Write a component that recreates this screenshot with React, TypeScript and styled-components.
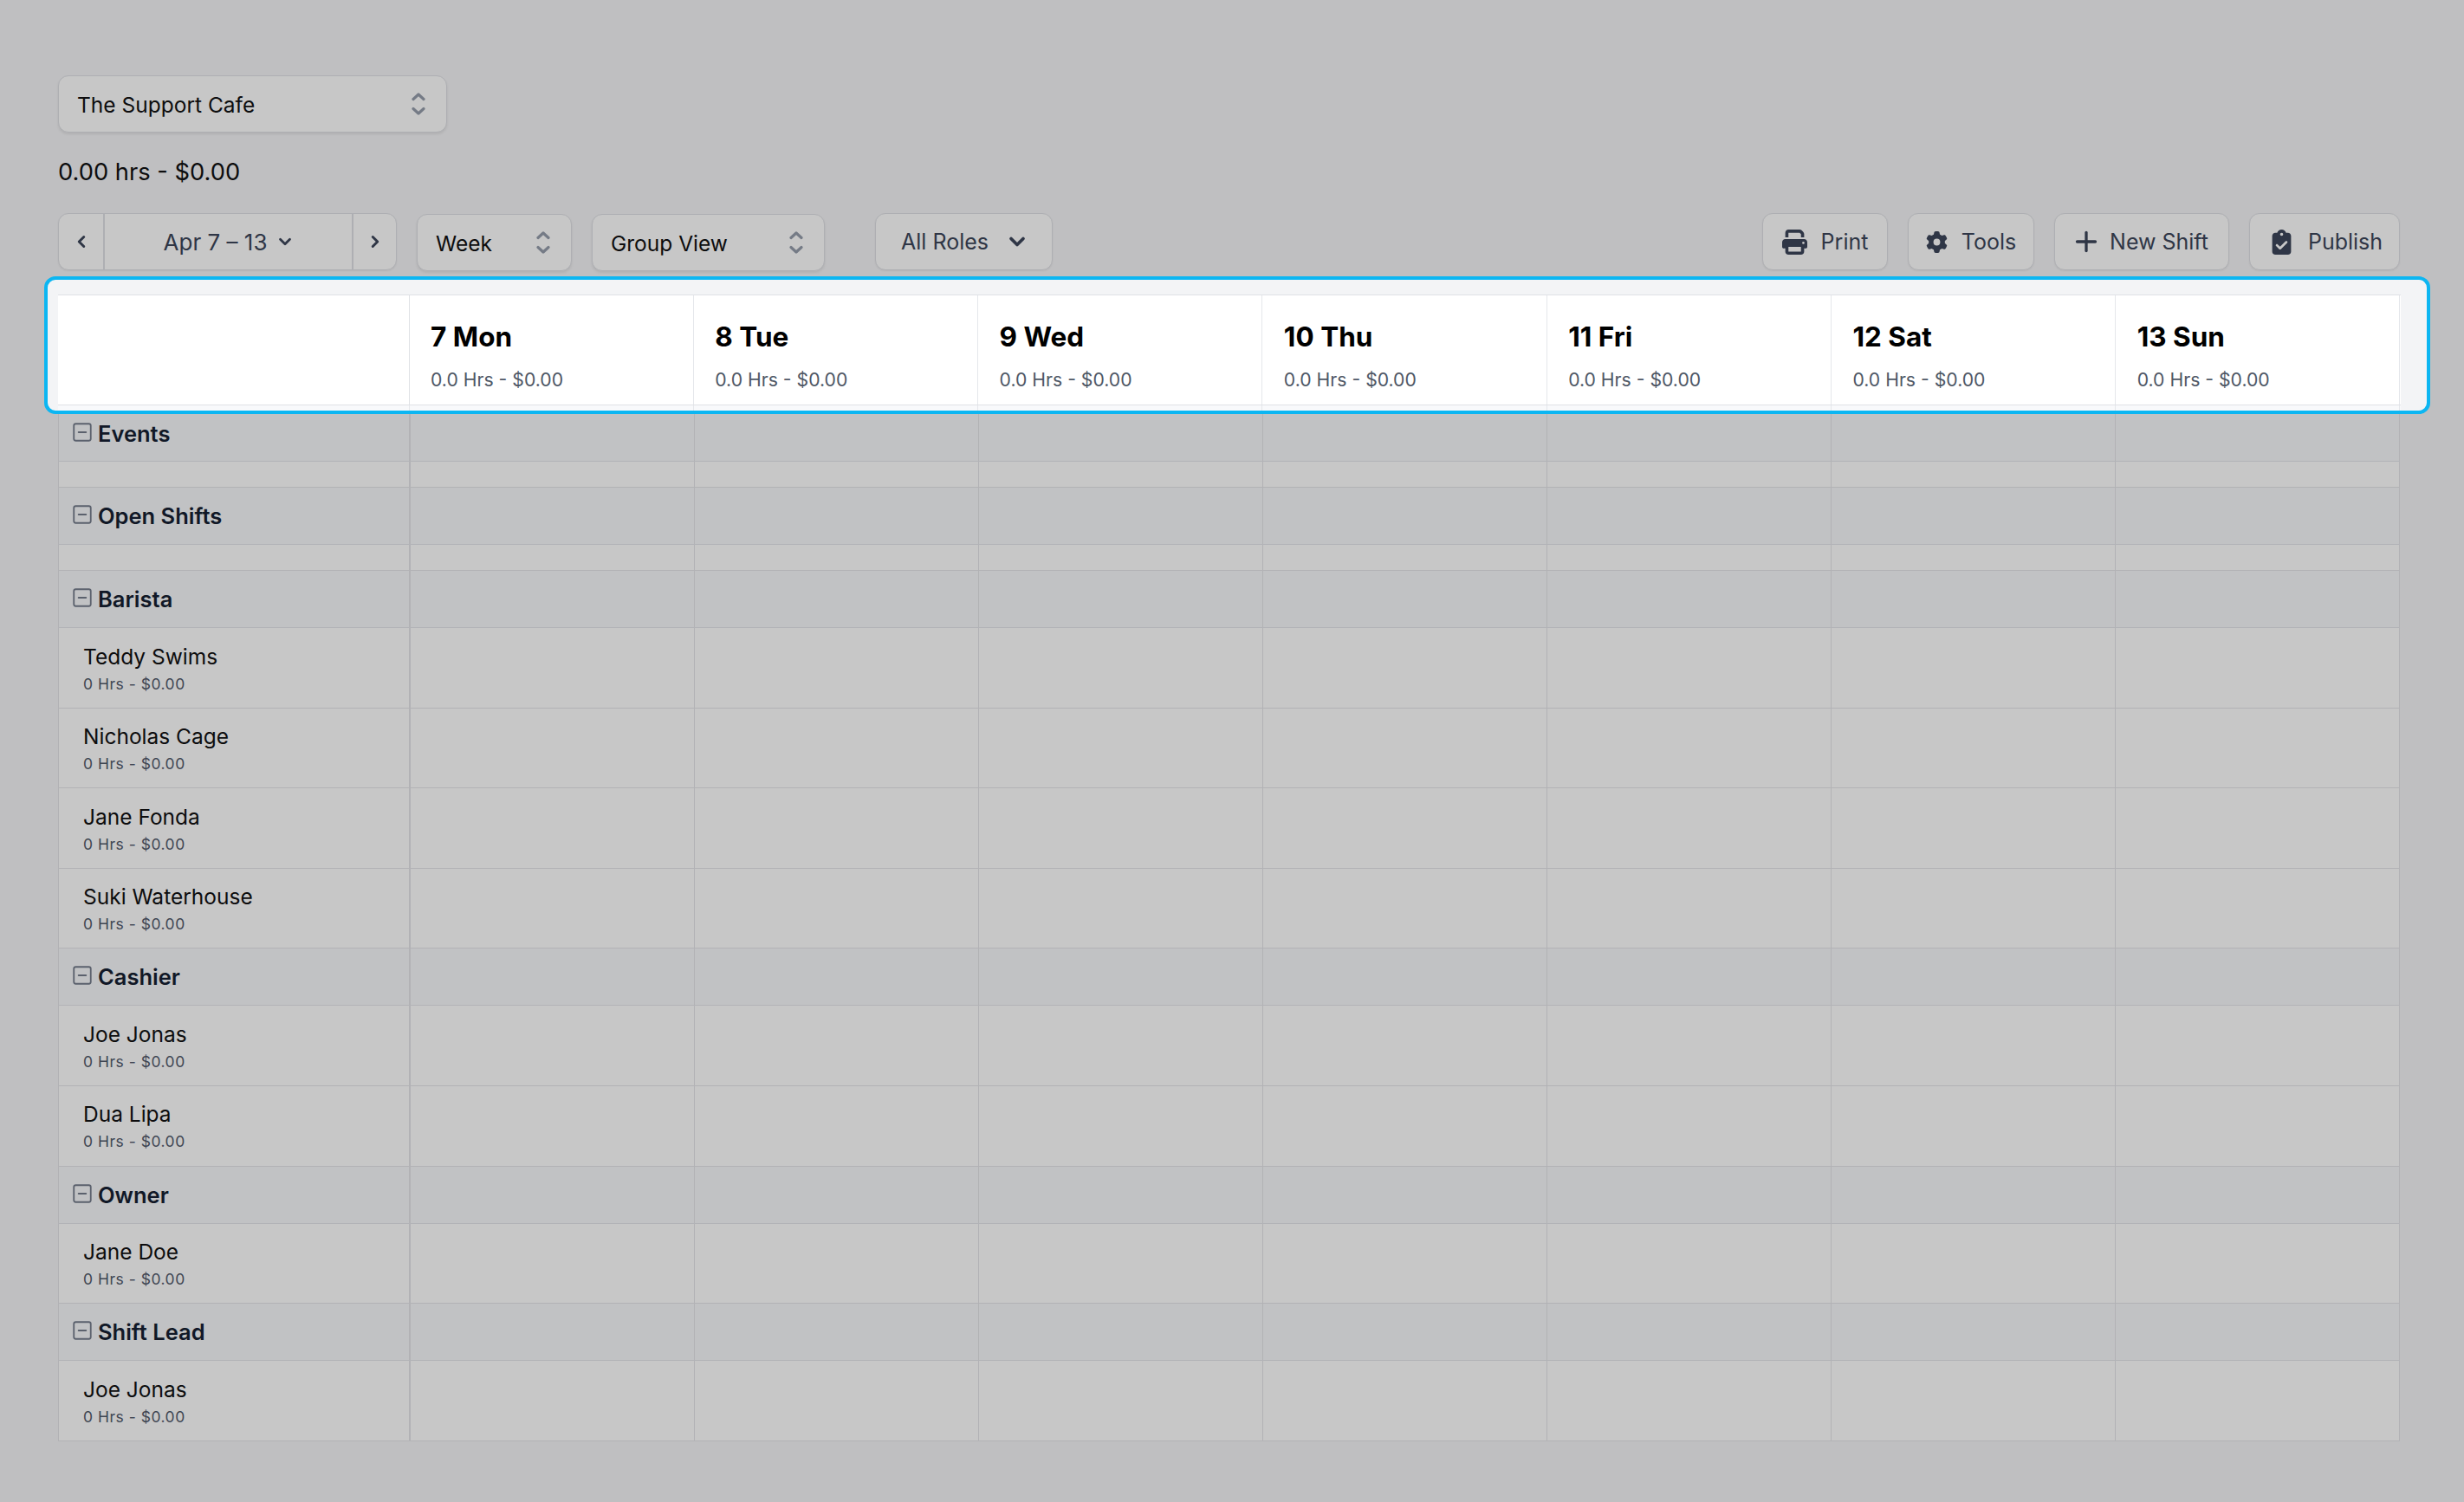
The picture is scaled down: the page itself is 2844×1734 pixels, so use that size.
import React from 'react';
import styled, { createGlobalStyle } from 'styled-components';
import { FaPrint, FaGear, FaClipboardCheck } from 'react-icons/fa6';
import { Plus, SquareMinus, ChevronLeft, ChevronRight, ChevronDown } from 'lucide-react';

const GlobalStyle = createGlobalStyle`
  html, body {
    margin: 0;
    background: #bfbfc1;
    font-family: Inter, "Noto Sans", sans-serif;
  }
`;

const days = ['7 Mon', '8 Tue', '9 Wed', '10 Thu', '11 Fri', '12 Sat', '13 Sun'];

const groups = [
  { name: 'Events', people: [], blank: true, first: true },
  { name: 'Open Shifts', people: [], blank: true },
  { name: 'Barista', people: ['Teddy Swims', 'Nicholas Cage', 'Jane Fonda', 'Suki Waterhouse'] },
  { name: 'Cashier', people: ['Joe Jonas', 'Dua Lipa'] },
  { name: 'Owner', people: ['Jane Doe'] },
  { name: 'Shift Lead', people: ['Joe Jonas'] },
];

const Updown = () => (
  <UpdownIcon viewBox="0 0 16 28" fill="none" stroke="#757b86" strokeWidth="3.2" strokeLinecap="round" strokeLinejoin="round">
    <path d="M2 8.5 8 3l6 5.5" />
    <path d="M2 19.5 8 25l6-5.5" />
  </UpdownIcon>
);

const App = () => {
  return (
    <Page>
      <GlobalStyle />
      <SelectBox $width={449}>
        The Support Cafe
        <Updown />
      </SelectBox>
      <Totals>0.00 hrs - $0.00</Totals>
      <Toolbar>
        <Pager>
          <PagerArrow $width={51}>
            <ChevronLeft size={22} strokeWidth={3.2} />
          </PagerArrow>
          <PagerLabel>
            Apr 7 – 13
            <ChevronDown size={22} strokeWidth={3} />
          </PagerLabel>
          <PagerArrow $width={49}>
            <ChevronRight size={22} strokeWidth={3.2} />
          </PagerArrow>
        </Pager>
        <SelectBox $width={179} $pill>
          Week
          <Updown />
        </SelectBox>
        <SelectBox $width={269} $pill>
          Group View
          <Updown />
        </SelectBox>
        <RolesButton>
          All Roles
          <ChevronDown size={28} strokeWidth={3.2} />
        </RolesButton>
        <Actions>
          <ActionButton $width={145}>
            <FaPrint size={29} />
            Print
          </ActionButton>
          <ActionButton $width={146}>
            <FaGear size={25} />
            Tools
          </ActionButton>
          <ActionButton $width={202}>
            <PlusIcon size={36} strokeWidth={2.2} />
            New Shift
          </ActionButton>
          <ActionButton $width={174} $inset={3}>
            <FaClipboardCheck size={29} />
            Publish
          </ActionButton>
        </Actions>
      </Toolbar>
      <Schedule>
        <Highlight>
          <HeaderRow>
            <HeaderCorner />
            {days.map((day) => (
              <DayCell key={day}>
                <DayName>{day}</DayName>
                <DayTotal>0.0 Hrs - $0.00</DayTotal>
              </DayCell>
            ))}
          </HeaderRow>
          <HeaderTail>
            <TailCell />
            {days.map((day) => (
              <TailCell key={day} />
            ))}
          </HeaderTail>
        </Highlight>
        {groups.map((group) => (
          <React.Fragment key={group.name}>
            <GroupRow $first={group.first}>
              <GroupLabel $first={group.first}>
                <MinusIcon size={26} strokeWidth={1.7} color="#5b616d" />
                {group.name}
              </GroupLabel>
              {days.map((day) => (
                <EmptyCell key={day} />
              ))}
            </GroupRow>
            {group.blank && (
              <BlankRow>
                <NameCell />
                {days.map((day) => (
                  <EmptyCell key={day} />
                ))}
              </BlankRow>
            )}
            {group.people.map((person) => (
              <PersonRow key={person}>
                <NameCell>
                  <PersonName>{person}</PersonName>
                  <PersonTotal>0 Hrs - $0.00</PersonTotal>
                </NameCell>
                {days.map((day) => (
                  <EmptyCell key={day} />
                ))}
              </PersonRow>
            ))}
          </React.Fragment>
        ))}
      </Schedule>
    </Page>
  );
};

const Page = styled.div`
  width: 2844px;
  height: 1734px;
  box-sizing: border-box;
  padding: 87px 74px 0 67px;
  overflow: hidden;
  background: #bfbfc1;
  color: #0d0d0e;
`;

const UpdownIcon = styled.svg`
  width: 16px;
  height: 28px;
  flex: none;
`;

const PlusIcon = styled(Plus)`
  margin: 0 -7px 0 -5px;
  flex: none;
`;

const MinusIcon = styled(SquareMinus)`
  margin-top: -3px;
  flex: none;
`;

const SelectBox = styled.div<{ $width: number; $pill?: boolean }>`
  width: ${({ $width }) => $width}px;
  height: 66px;
  box-sizing: border-box;
  padding: 2px 24px 0 21px;
  display: flex;
  align-items: center;
  justify-content: space-between;
  background: #c7c7c7;
  border: 1.5px solid #aeafb3;
  border-radius: 12px;
  box-shadow: 0 2px 3px rgba(0, 0, 0, 0.08);
  font-size: 24.5px;
  margin-top: ${({ $pill }) => ($pill ? '1px' : '0')};

  svg {
    margin-top: -2px;
  }
`;

const Totals = styled.div`
  margin-top: 28px;
  height: 36px;
  line-height: 36px;
  font-size: 27.3px;
`;

const Toolbar = styled.div`
  margin-top: 29px;
  display: flex;
  align-items: flex-start;
  gap: 23px;
`;

const Pager = styled.div`
  width: 391px;
  height: 66px;
  box-sizing: border-box;
  display: flex;
  background: #c7c7c7;
  border: 1.5px solid #aeafb3;
  border-radius: 12px;
  box-shadow: 0 1px 2px rgba(0, 0, 0, 0.06);
  color: #2f3646;
`;

const PagerArrow = styled.div<{ $width: number }>`
  width: ${({ $width }) => $width}px;
  display: flex;
  align-items: center;
  justify-content: center;
`;

const PagerLabel = styled.div`
  flex: 1;
  display: flex;
  align-items: center;
  justify-content: center;
  gap: 10px;
  padding-left: 2px;
  font-size: 26px;
  border-left: 2px solid #aeafb3;
  border-right: 2px solid #aeafb3;
`;

const RolesButton = styled.div`
  margin-left: 35px;
  width: 205px;
  height: 66px;
  box-sizing: border-box;
  padding-left: 3px;
  display: flex;
  align-items: center;
  justify-content: center;
  gap: 19px;
  background: #c7c7c7;
  border: 1.5px solid #aeafb3;
  border-radius: 12px;
  box-shadow: 0 1px 2px rgba(0, 0, 0, 0.06);
  color: #2f3646;
  font-size: 25px;
`;

const Actions = styled.div`
  margin-left: auto;
  display: flex;
  gap: 23px;
`;

const ActionButton = styled.div<{ $width: number; $inset?: number }>`
  width: ${({ $width }) => $width}px;
  height: 66px;
  box-sizing: border-box;
  padding-left: ${({ $inset }) => $inset || 0}px;
  display: flex;
  align-items: center;
  justify-content: center;
  gap: 16px;
  background: #c7c7c7;
  border: 1.5px solid #aeafb3;
  border-radius: 12px;
  box-shadow: 0 1px 2px rgba(0, 0, 0, 0.06);
  color: #2f3646;
  font-size: 25px;
`;

const Schedule = styled.div`
  margin-top: 6px;
  width: 2703px;
`;

const Highlight = styled.div`
  margin: 0 -35px 0 -16px;
  padding: 16.5px 30.5px 0 11.5px;
  height: 159px;
  box-sizing: border-box;
  position: relative;
  z-index: 1;
  background: #f3f4f6;
  border: 4.5px solid #0cb6f2;
  border-radius: 13px;
`;

const rowColumns = 'grid-template-columns: 406px repeat(7, 1fr);';

const HeaderRow = styled.div`
  display: grid;
  ${rowColumns}
  height: 128px;
  box-sizing: border-box;
  background: #fff;
  border-top: 1.5px solid #dfe1e5;
  border-bottom: 1.5px solid #dfe1e5;
`;

const HeaderCorner = styled.div`
  border-right: 1px solid #dfe1e5;
`;

const DayCell = styled.div`
  padding: 26px 0 0 24.5px;
  border-right: 1px solid #e5e7eb;
`;

const DayName = styled.div`
  font-size: 31.5px;
  font-weight: 650;
  line-height: 44px;
  color: #000;
`;

const DayTotal = styled.div`
  margin-top: 12px;
  font-size: 21.2px;
  line-height: 30px;
  color: #4f5866;
`;

const HeaderTail = styled.div`
  display: grid;
  ${rowColumns}
  height: 6px;
  background: #f8f9fb;
`;

const TailCell = styled.div`
  border-right: 1px solid #e5e7eb;
`;

const GroupRow = styled.div<{ $first?: boolean }>`
  display: grid;
  ${rowColumns}
  height: ${({ $first }) => ($first ? 55 : 66)}px;
  box-sizing: border-box;
  background: #c1c2c4;
  border-left: 1.5px solid #b2b2b5;
  border-bottom: 1.5px solid #b2b3b7;
`;

const GroupLabel = styled.div<{ $first?: boolean }>`
  display: flex;
  align-items: center;
  gap: 5px;
  padding: 0 0 ${({ $first }) => ($first ? '9px' : '0')} 14px;
  font-size: 25.5px;
  font-weight: 600;
  color: #111827;
  border-right: 2px solid #b2b2b5;
`;

const EmptyCell = styled.div`
  border-right: 1px solid #b2b2b5;
`;

const BlankRow = styled.div`
  display: grid;
  ${rowColumns}
  height: 30px;
  box-sizing: border-box;
  background: #c7c7c7;
  border-left: 1.5px solid #b2b2b5;
  border-bottom: 1.5px solid #b2b2b5;
`;

const PersonRow = styled.div`
  display: grid;
  ${rowColumns}
  height: 92.6px;
  box-sizing: border-box;
  background: #c7c7c7;
  border-left: 1.5px solid #b2b2b5;
  border-bottom: 1.5px solid #b2b2b5;
`;

const NameCell = styled.div`
  padding: 15.5px 0 0 28px;
  border-right: 2px solid #b2b2b5;
`;

const PersonName = styled.div`
  font-size: 24.5px;
  line-height: 34px;
  color: #0d0d0e;
`;

const PersonTotal = styled.div`
  margin-top: 4px;
  font-size: 17.5px;
  line-height: 22px;
  letter-spacing: 0.5px;
  color: #3f4653;
`;

export default App;
